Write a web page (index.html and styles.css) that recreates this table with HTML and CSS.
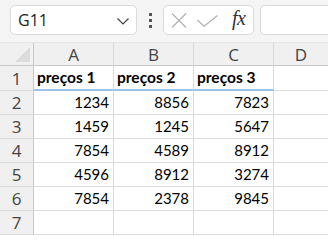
FILE: index.html
```html
<!DOCTYPE html>
<html>
<head>
<meta charset="utf-8">
<link rel="stylesheet" href="styles.css">
</head>
<body>
<div class="topbar">
  <div class="namebox">
    <span class="ref">G11</span>
    <svg class="chev" width="12" height="7" viewBox="0 0 12 7"><path d="M0.5 0.5 L6 6 L11.5 0.5" fill="none" stroke="#444" stroke-width="1.2"/></svg>
  </div>
  <div class="dots"><i></i><i></i><i></i></div>
  <div class="fxbox">
    <svg class="icon-x" width="16" height="15" viewBox="0 0 16 15"><path d="M1 0.5 L15 14.5 M15 0.5 L1 14.5" stroke="#b4b4b4" stroke-width="1.3" fill="none"/></svg>
    <svg class="icon-check" width="21" height="12" viewBox="0 0 21 12"><path d="M0.5 5 L7 11.3 L20.5 0.5" stroke="#b4b4b4" stroke-width="1.3" fill="none"/></svg>
    <span class="fx">fx</span>
  </div>
  <div class="formula"></div>
</div>
<div class="grid">
  <div class="corner"><span class="tri"></span></div>
  <div class="colh">A</div><div class="colh">B</div><div class="colh">C</div><div class="colh last">D</div>

  <div class="rowh r1">1</div>
  <div class="cell hd">preços 1</div><div class="cell hd">preços 2</div><div class="cell hd">preços 3</div><div class="cell r1 last"></div>

  <div class="rowh">2</div>
  <div class="cell num">1234</div><div class="cell num">8856</div><div class="cell num">7823</div><div class="cell last"></div>

  <div class="rowh">3</div>
  <div class="cell num">1459</div><div class="cell num">1245</div><div class="cell num">5647</div><div class="cell last"></div>

  <div class="rowh">4</div>
  <div class="cell num">7854</div><div class="cell num">4589</div><div class="cell num">8912</div><div class="cell last"></div>

  <div class="rowh">5</div>
  <div class="cell num">4596</div><div class="cell num">8912</div><div class="cell num">3274</div><div class="cell last"></div>

  <div class="rowh">6</div>
  <div class="cell num">7854</div><div class="cell num">2378</div><div class="cell num">9845</div><div class="cell last"></div>

  <div class="rowh">7</div>
  <div class="cell"></div><div class="cell"></div><div class="cell"></div><div class="cell last"></div>
</div>
</body>
</html>
```
FILE: styles.css
```css
* { box-sizing: border-box; }
html, body { margin: 0; padding: 0; }
body {
  width: 328px;
  height: 240px;
  overflow: hidden;
  background: #ffffff;
  font-family: "Lato", "Open Sans", sans-serif;
}
.topbar {
  height: 43px;
  background: #f5f5f5;
  border-bottom: 1px solid #e6e6e6;
  display: flex;
  align-items: flex-start;
  padding-top: 5px;
  padding-left: 10px;
}
.namebox {
  width: 127px;
  height: 30px;
  background: #fff;
  border: 1px solid #dadada;
  border-radius: 5px;
  display: flex;
  align-items: center;
  justify-content: space-between;
  padding: 0 7px 0 7px;
}
.ref {
  font-family: "Open Sans", sans-serif;
  font-size: 16px;
  color: #222;
}
.chev { margin-top: 2px; }
.dots {
  width: 26px;
  height: 30px;
  display: flex;
  flex-direction: column;
  align-items: center;
  justify-content: center;
  gap: 3px;
}
.dots i {
  display: block;
  width: 3px;
  height: 3px;
  background: #555;
}
.fxbox {
  width: 91px;
  height: 30px;
  background: #fff;
  border: 1px solid #dadada;
  border-radius: 5px;
  display: flex;
  align-items: center;
  padding-left: 7px;
}
.icon-x { margin-top: 1px; }
.icon-check { margin-left: 10px; margin-top: 1px; }
.fx {
  margin-left: 14px;
  font-family: "Liberation Serif", serif;
  font-style: italic;
  font-size: 20px;
  color: #333;
  letter-spacing: -0.5px;
  margin-top: -3px;
}
.formula {
  margin-left: 6px;
  flex: 1;
  height: 30px;
  background: #fff;
  border: 1px solid #dadada;
  border-right: none;
  border-radius: 5px 0 0 5px;
}
.grid {
  display: grid;
  grid-template-columns: 34px 80px 80px 80px 1fr;
  grid-template-rows: 23px 25px repeat(6, 24px);
}
.corner, .colh, .rowh {
  background: #f0f0f0;
  font-family: "Open Sans", sans-serif;
  font-size: 17px;
  color: #444;
}
.corner {
  border-right: 1px solid #c8c8c8;
  border-bottom: 1px solid #c8c8c8;
  position: relative;
}
.tri {
  position: absolute;
  right: 3px;
  bottom: 3px;
  width: 0;
  height: 0;
  border-left: 15px solid transparent;
  border-bottom: 15px solid #dcdcdc;
}
.colh {
  border-right: 1px solid #dadada;
  border-bottom: 1px solid #c8c8c8;
  display: flex;
  align-items: center;
  justify-content: center;
  line-height: 1;
}
.colh.last { border-right: none; }
.rowh {
  border-right: 1px solid #c8c8c8;
  border-bottom: 1px solid #dadada;
  display: flex;
  align-items: center;
  justify-content: center;
  line-height: 1;
}
.cell {
  border-right: 1px solid #dcdcdc;
  border-bottom: 1px solid #dcdcdc;
  font-size: 15px;
  color: #000;
  display: flex;
  align-items: center;
  padding: 0 4px 0 3px;
  line-height: 1;
}
.cell.last { border-right: none; }
.cell.hd {
  font-weight: 700;
  font-size: 15.5px;
  border-bottom: 2px solid #9fc3e7;
}
.cell.num { justify-content: flex-end; }
```
